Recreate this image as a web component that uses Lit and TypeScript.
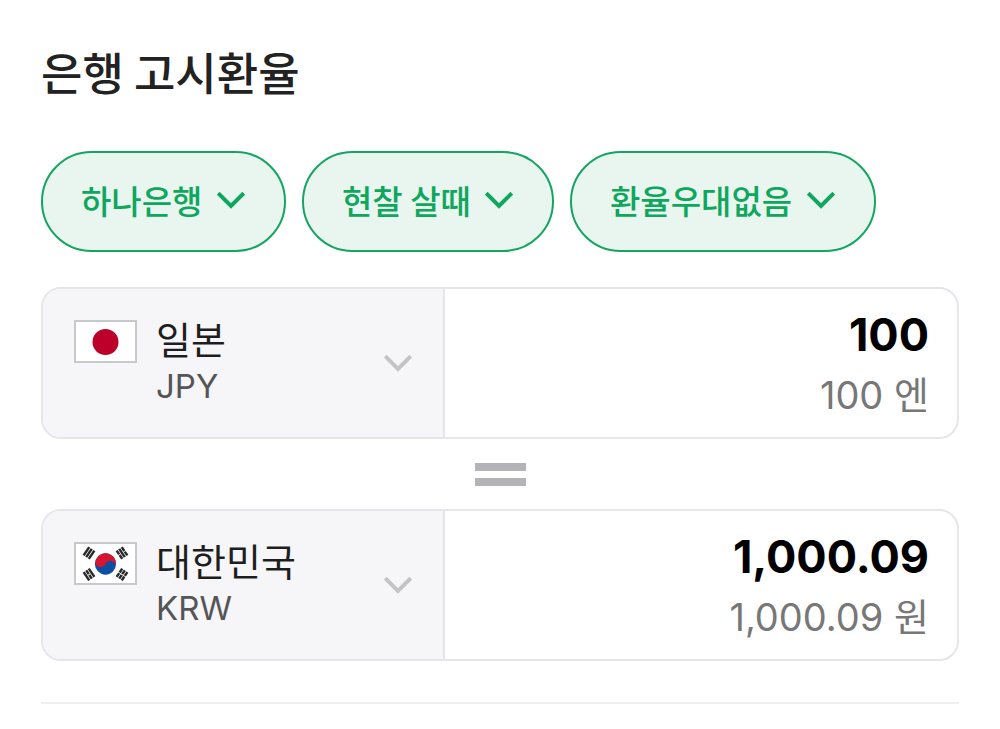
import { LitElement, html, css, svg } from "lit";
import { customElement, property } from "lit/decorators.js";

const chevron = html`<svg class="chevron" viewBox="0 0 28 18" width="28" height="18" fill="none" stroke="currentColor" stroke-width="4" aria-hidden="true"><path d="M1.200 2.200 14 15 26.800 2.200" /></svg>`;

const flags: Record<string, unknown> = {
  JPY: html`<svg class="flag" viewBox="0 0 63 43" width="63" height="43" aria-hidden="true">
    <rect x="1" y="1" width="61" height="41" fill="#fff" stroke="#c8c9cc" stroke-width="2" />
    <circle cx="31.500" cy="22" r="13" fill="#bd0029" />
  </svg>`,
  KRW: html`<svg class="flag" viewBox="0 0 63 43" width="63" height="43" aria-hidden="true">
    <rect x="1" y="1" width="61" height="41" fill="#fff" stroke="#c8c9cc" stroke-width="2" />
    <g transform="translate(31.500 22)">
      <g transform="rotate(24)">
        <circle r="10.600" fill="#0b4ea2" />
        <path d="M-10.600 0A10.600 10.600 0 0 1 10.600 0A5.300 5.300 0 0 0 0 0A5.300 5.300 0 0 1 -10.600 0Z" fill="#d8152f" />
      </g>
      <g stroke="#2a2a2c" stroke-width="2.500">
        ${[
          [-16.5, -11, -56, [0, 0, 0]],
          [16.5, -11, 56, [1, 0, 1]],
          [-16.5, 10.5, 56, [0, 1, 0]],
          [16.5, 10.5, -56, [1, 1, 1]],
        ].map(
          ([x, y, angle, broken]: any) => svg`<g transform="translate(${x} ${y}) rotate(${angle})">
            ${broken.map((b: number, i: number) => svg`<path d=${b ? `M-5 ${(i - 1) * 3.1}h4.600m.8 0h4.600` : `M-5 ${(i - 1) * 3.1}h10`} />`)}
          </g>`
        )}
      </g>
    </g>
  </svg>`,
};

@customElement("filter-select")
export class FilterSelect extends LitElement {
  @property() label = "";
  @property() value = "";

  static styles = css`
    :host { display: block; }
    .pill { display: grid; align-items: center; color: #0fa65d; }
    .select {
      grid-area: 1 / 1;
      appearance: none;
      box-sizing: border-box;
      height: 101px;
      margin: 0;
      padding: 0 81px 4px 38px;
      border: 2px solid #14a562;
      border-radius: 51px;
      background: #e9f6f0;
      color: inherit;
      font: 500 33px/48px "Noto Sans CJK KR", sans-serif;
      cursor: pointer;
    }
    .chevron { grid-area: 1 / 1; justify-self: end; margin-right: 41px; margin-bottom: 4px; pointer-events: none; }
  `;

  render() {
    return html`<div class="pill">
      <select class="select" aria-label=${this.label}><option>${this.value}</option></select>
      ${chevron}
    </div>`;
  }
}

@customElement("currency-row")
export class CurrencyRow extends LitElement {
  @property() country = "";
  @property() code = "";
  @property() amount = "";
  @property() unit = "";

  static styles = css`
    :host { display: block; }
    .row {
      display: flex;
      border: 2px solid #e5e6e9;
      border-radius: 20px;
      overflow: hidden;
      background: #fff;
    }
    .currency {
      flex: 0 0 44%;
      box-sizing: border-box;
      display: flex;
      align-items: center;
      gap: 19px;
      margin: 0;
      padding: 28px 31px;
      border: 0;
      border-right: 2px solid #e5e6e9;
      background: #f6f6f9;
      font-family: Inter, "Noto Sans CJK KR", sans-serif;
      text-align: left;
      cursor: pointer;
    }
    .flag { flex: none; align-self: flex-start; margin-top: 3px; }
    .names { flex: 1; display: flex; flex-direction: column; }
    .country { font-size: 38px; line-height: 46px; color: #1e1e20; }
    .code { font-size: 33px; line-height: 46px; color: #555558; }
    .chevron { flex: none; color: #c4c4c6; }
    .money {
      flex: 1;
      min-width: 0;
      display: flex;
      flex-direction: column;
      padding: 16px 28px 12px;
      font-family: Inter, "Noto Sans CJK KR", sans-serif;
      text-align: right;
    }
    .amount {
      width: 100%;
      box-sizing: border-box;
      height: 60px;
      padding: 0;
      border: 0;
      outline: 0;
      background: none;
      color: #000;
      font: 700 45px/60px Inter, sans-serif;
      text-align: right;
    }
    .reading { font-size: 38px; line-height: 60px; font-weight: 400; color: #777; }
  `;

  render() {
    return html`<div class="row">
      <button class="currency" type="button" aria-haspopup="listbox">
        ${flags[this.code]}
        <span class="names">
          <span class="country">${this.country}</span>
          <span class="code">${this.code}</span>
        </span>
        ${chevron}
      </button>
      <div class="money">
        <input class="amount" inputmode="decimal" aria-label=${this.country} .value=${this.amount} />
        <span class="reading">${this.amount} ${this.unit}</span>
      </div>
    </div>`;
  }
}

@customElement("app-root")
export class AppRoot extends LitElement {
  static styles = css`
    :host { display: block; background: #fff; }
    .panel { padding: 38px 41px 0; }
    .title {
      margin: 0;
      color: #222;
      font: 500 45px/68px "Noto Sans CJK KR", sans-serif;
    }
    .filters { display: flex; flex-wrap: wrap; gap: 16px; margin-top: 45px; }
    .converter { margin-top: 35px; padding-bottom: 41px; border-bottom: 2px solid #efeff0; }
    .equals {
      display: flex;
      flex-direction: column;
      align-items: center;
      justify-content: center;
      gap: 7px;
      height: 70px;
    }
    .bar { width: 51px; height: 8px; background: #b4b4b8; }
  `;

  render() {
    return html`<main class="panel">
      <h2 class="title">은행 고시환율</h2>
      <div class="filters">
        <filter-select label="은행" value="하나은행"></filter-select>
        <filter-select label="거래" value="현찰 살때"></filter-select>
        <filter-select label="우대율" value="환율우대없음"></filter-select>
      </div>
      <div class="converter">
        <currency-row country="일본" code="JPY" amount="100" unit="엔"></currency-row>
        <div class="equals" role="img" aria-label="="><span class="bar"></span><span class="bar"></span></div>
        <currency-row country="대한민국" code="KRW" amount="1,000.09" unit="원"></currency-row>
      </div>
    </main>`;
  }
}
